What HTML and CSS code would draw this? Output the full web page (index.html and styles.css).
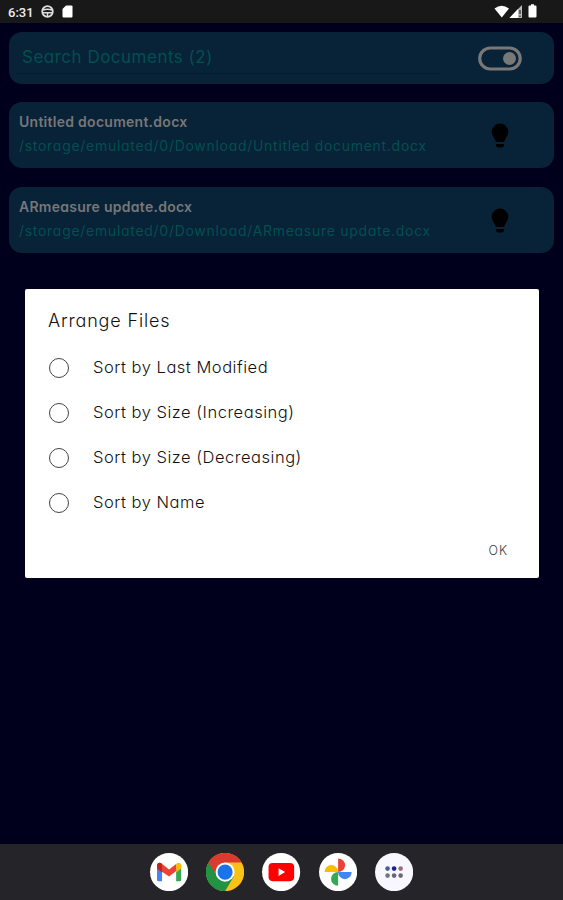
FILE: index.html
```html
<!DOCTYPE html>
<html lang="en">
<head>
    <meta charset="UTF-8">
    <meta name="viewport" content="width=device-width, initial-scale=1.0">
    <title>Documents</title>
    <link rel="stylesheet" href="styles.css">
</head>
<body>
    <div class="screen">
        <header class="status-bar">
            <span class="clock">6:31</span>
            <svg class="status-wheel" width="13" height="13" viewBox="0 0 13 13">
                <circle cx="6.5" cy="6.5" r="5.3" fill="none" stroke="#ddd" stroke-width="1.8"/>
                <path d="M2 5Q6.500 3.400 11 5M2 7.800H11M6.500 8V11.500" fill="none" stroke="#ddd" stroke-width="1.500"/>
            </svg>
            <svg class="status-card" width="11" height="13" viewBox="0 0 11 13">
                <path d="M4 .5H9.500Q10.500 .5 10.500 1.500V11.500Q10.500 12.500 9.500 12.500H1.500Q.5 12.500 .5 11.500V4Z" fill="#fff"/>
            </svg>
            <svg class="status-signals" width="44" height="15" viewBox="0 0 44 15">
                <path d="M.5 4.500Q7.500-1 15 4.500L7.800 13.500Z" fill="#fff"/>
                <path d="M28 1V14H15.500Z" fill="#bbb"/>
                <path d="M24 5V14H15.500Z" fill="#fff"/>
                <path d="M26 6V10M26 11.500V13" stroke="#222" stroke-width="1.200"/>
                <path d="M35.500 1.500H37V.3H40V1.500H41.500Q42.500 1.500 42.500 2.500V12.500Q42.500 13.500 41.500 13.500H35.500Q34.500 13.500 34.500 12.500V2.500Q34.500 1.500 35.500 1.500Z" fill="#fff"/>
            </svg>
        </header>

        <main class="content">
            <div class="card search">
                <div class="search-field">Search Documents (2)</div>
                <svg class="toggle" width="44" height="25" viewBox="0 0 44 25">
                    <rect x="1.700" y="2" width="40.500" height="21" rx="10.500" fill="none" stroke="#787878" stroke-width="3.200"/>
                    <circle cx="31.500" cy="12.500" r="6.500" fill="#787878"/>
                </svg>
            </div>

            <div class="card document">
                <div class="document-info">
                    <div class="document-name">Untitled document.docx</div>
                    <div class="document-path">/storage/emulated/0/Download/Untitled document.docx</div>
                </div>
                <svg class="bulb" width="18" height="26" viewBox="0 0 18 26">
                    <path d="M9 .5A8.300 8.300 0 0 1 17.300 8.800C17.300 12 15.500 14 14.200 16L13 19H5L3.800 16C2.500 14 .7 12 .7 8.800A8.300 8.300 0 0 1 9 .5ZM5 21H13V22.300Q13 24.500 10.500 24.500H7.500Q5 24.500 5 22.300Z" fill="#000"/>
                </svg>
            </div>

            <div class="card document">
                <div class="document-info">
                    <div class="document-name">ARmeasure update.docx</div>
                    <div class="document-path">/storage/emulated/0/Download/ARmeasure update.docx</div>
                </div>
                <svg class="bulb" width="18" height="26" viewBox="0 0 18 26">
                    <path d="M9 .5A8.300 8.300 0 0 1 17.300 8.800C17.300 12 15.500 14 14.200 16L13 19H5L3.800 16C2.500 14 .7 12 .7 8.800A8.300 8.300 0 0 1 9 .5ZM5 21H13V22.300Q13 24.500 10.500 24.500H7.500Q5 24.500 5 22.300Z" fill="#000"/>
                </svg>
            </div>
        </main>

        <!-- Sort dialog -->
        <div class="dialog">
            <div class="dialog-title">Arrange Files</div>
            <div class="option"><span class="radio"></span><span class="label">Sort by Last Modified</span></div>
            <div class="option"><span class="radio"></span><span class="label">Sort by Size (Increasing)</span></div>
            <div class="option"><span class="radio"></span><span class="label">Sort by Size (Decreasing)</span></div>
            <div class="option"><span class="radio"></span><span class="label">Sort by Name</span></div>
            <div class="dialog-actions">OK</div>
        </div>

        <footer class="dock">
            <svg class="app" viewBox="0 0 38 38">
                <circle cx="19" cy="19" r="19" fill="#fff"/>
                <path d="M7 12V26.500Q7 28 8.500 28H12V17Z" fill="#4285f4"/>
                <path d="M26 17V28H29.500Q31 28 31 26.500V12Z" fill="#34a853"/>
                <path d="M26 12V19.500L31 15.500V12.500C31 9.500 28 9 26.500 10.500Z" fill="#fbbc04"/>
                <path d="M7 12.500C7 9.500 10 9 11.500 10.500L19 16.300 26 11V18L19 23.500 7 15.500Z" fill="#ea4335"/>
                <path d="M7 12.500C7 9.500 10 9 12 11V19.500L7 15.500Z" fill="#c5221f"/>
            </svg>
            <svg class="app" viewBox="0 0 38 38">
                <circle cx="19" cy="19" r="19" fill="#fbc116"/>
                <path d="M19 19L2.500 9.500A19 19 0 0 0 19 38L28 23Z" fill="#229342"/>
                <path d="M2.500 9.500A19 19 0 0 1 35.500 9.500H19L11 23.500Z" fill="#db3a2e"/>
                <circle cx="19" cy="19" r="9.500" fill="#fff"/>
                <circle cx="19" cy="19" r="7.500" fill="#1a73e8"/>
            </svg>
            <svg class="app" viewBox="0 0 38 38">
                <circle cx="19" cy="19" r="19" fill="#fff"/>
                <rect x="6.500" y="10" width="25.500" height="18" rx="4" fill="#f00"/>
                <path d="M16.500 15.200L23 19 16.500 22.800Z" fill="#fff"/>
            </svg>
            <svg class="app" viewBox="0 0 38 38">
                <circle cx="19" cy="19" r="19" fill="#fff"/>
                <path d="M19 19V5.500A7 6.750 0 0 1 19 19Z" fill="#ea4335"/>
                <path d="M19 19H32.500A6.750 7 0 0 1 19 19Z" fill="#4285f4"/>
                <path d="M19 19V32.500A7 6.750 0 0 1 19 19Z" fill="#34a853"/>
                <path d="M19 19H5.500A6.750 7 0 0 1 19 19Z" fill="#fbbc04"/>
            </svg>
            <svg class="app" viewBox="0 0 38 38">
                <circle cx="19" cy="19" r="19" fill="#f8f6ff"/>
                <circle cx="12.500" cy="15.500" r="2.300" fill="#43618c"/>
                <circle cx="19" cy="15.500" r="2.300" fill="#17239a"/>
                <circle cx="25.500" cy="15.500" r="2.300" fill="#957083"/>
                <circle cx="12.500" cy="22.500" r="2.300" fill="#72757d"/>
                <circle cx="19" cy="22.500" r="2.300" fill="#606780"/>
                <circle cx="25.500" cy="22.500" r="2.300" fill="#6c6878"/>
            </svg>
        </footer>
    </div>
</body>
</html>
```
FILE: styles.css
```css
* {
    box-sizing: border-box;
}

body {
    margin: 0;
    background: #00001d;
    font-family: Inter, "Open Sans", sans-serif;
    /* single-storey a */
    font-feature-settings: "cv11";
}

.screen {
    position: relative;
    display: flex;
    flex-direction: column;
    width: 563px;
    height: 900px;
    overflow: hidden;
}

.status-bar {
    display: flex;
    align-items: center;
    height: 23px;
    padding: 0 25px 0 8px;
    background: #181818;
}

.clock {
    width: 33px;
    padding-top: 1px;
    color: #eee;
    font: 500 13px Roboto, sans-serif;
}

.status-card {
    margin-left: 8px;
}

.status-signals {
    margin-left: auto;
    margin-bottom: 1px;
}

.content {
    flex: 1;
    display: flex;
    flex-direction: column;
    gap: 18.3px;
    padding: 9px 9px 0;
}

.card {
    display: flex;
    justify-content: space-between;
    height: 66px;
    border-radius: 13px;
    background: #082238;
}

.search {
    height: 52px;
    padding: 0 32px 0 7px;
    align-items: center;
}

.search-field {
    width: 425px;
    height: 33px;
    margin-bottom: 1px;
    padding: 5px 0 0 6px;
    border-bottom: 1px solid #051b30;
    color: #00504f;
    font-size: 17px;
    line-height: 22px;
    letter-spacing: 0.5px;
}

.document {
    padding: 9px 45px 0 10px;
}

.document-name {
    color: #777;
    font-size: 14px;
    font-weight: 600;
    line-height: 21px;
    letter-spacing: 0.27px;
}

.document-path {
    margin-top: 3px;
    color: #00504f;
    font-size: 14px;
    line-height: 21px;
    letter-spacing: 0.71px;
}

.bulb {
    margin-top: 12px;
}

.dialog {
    position: absolute;
    left: 25px;
    top: 289px;
    width: 514px;
    height: 289px;
    padding: 19px 31px 0 23px;
    border-radius: 2px;
    background: #fff;
    color: #111;
}

.dialog-title {
    height: 37px;
    font-size: 18px;
    font-weight: 300;
    line-height: 26px;
    letter-spacing: 0.85px;
}

.option {
    display: flex;
    align-items: center;
    gap: 24px;
    height: 45px;
    font-size: 16.5px;
    font-weight: 300;
    letter-spacing: 0.52px;
}

.radio {
    width: 20px;
    height: 20px;
    margin-left: 1px;
    border: 1.5px solid #444;
    border-radius: 50%;
}

.label {
    margin-top: -2px;
}

.dialog-actions {
    margin-top: 16px;
    color: #444;
    font-size: 12.5px;
    font-weight: 300;
    line-height: 20px;
    letter-spacing: 1px;
    text-align: right;
}

.dock {
    display: flex;
    align-items: center;
    justify-content: center;
    gap: 18px;
    height: 56px;
    background: #252529;
}

.app {
    width: 38.2px;
    height: 38.2px;
}
```
